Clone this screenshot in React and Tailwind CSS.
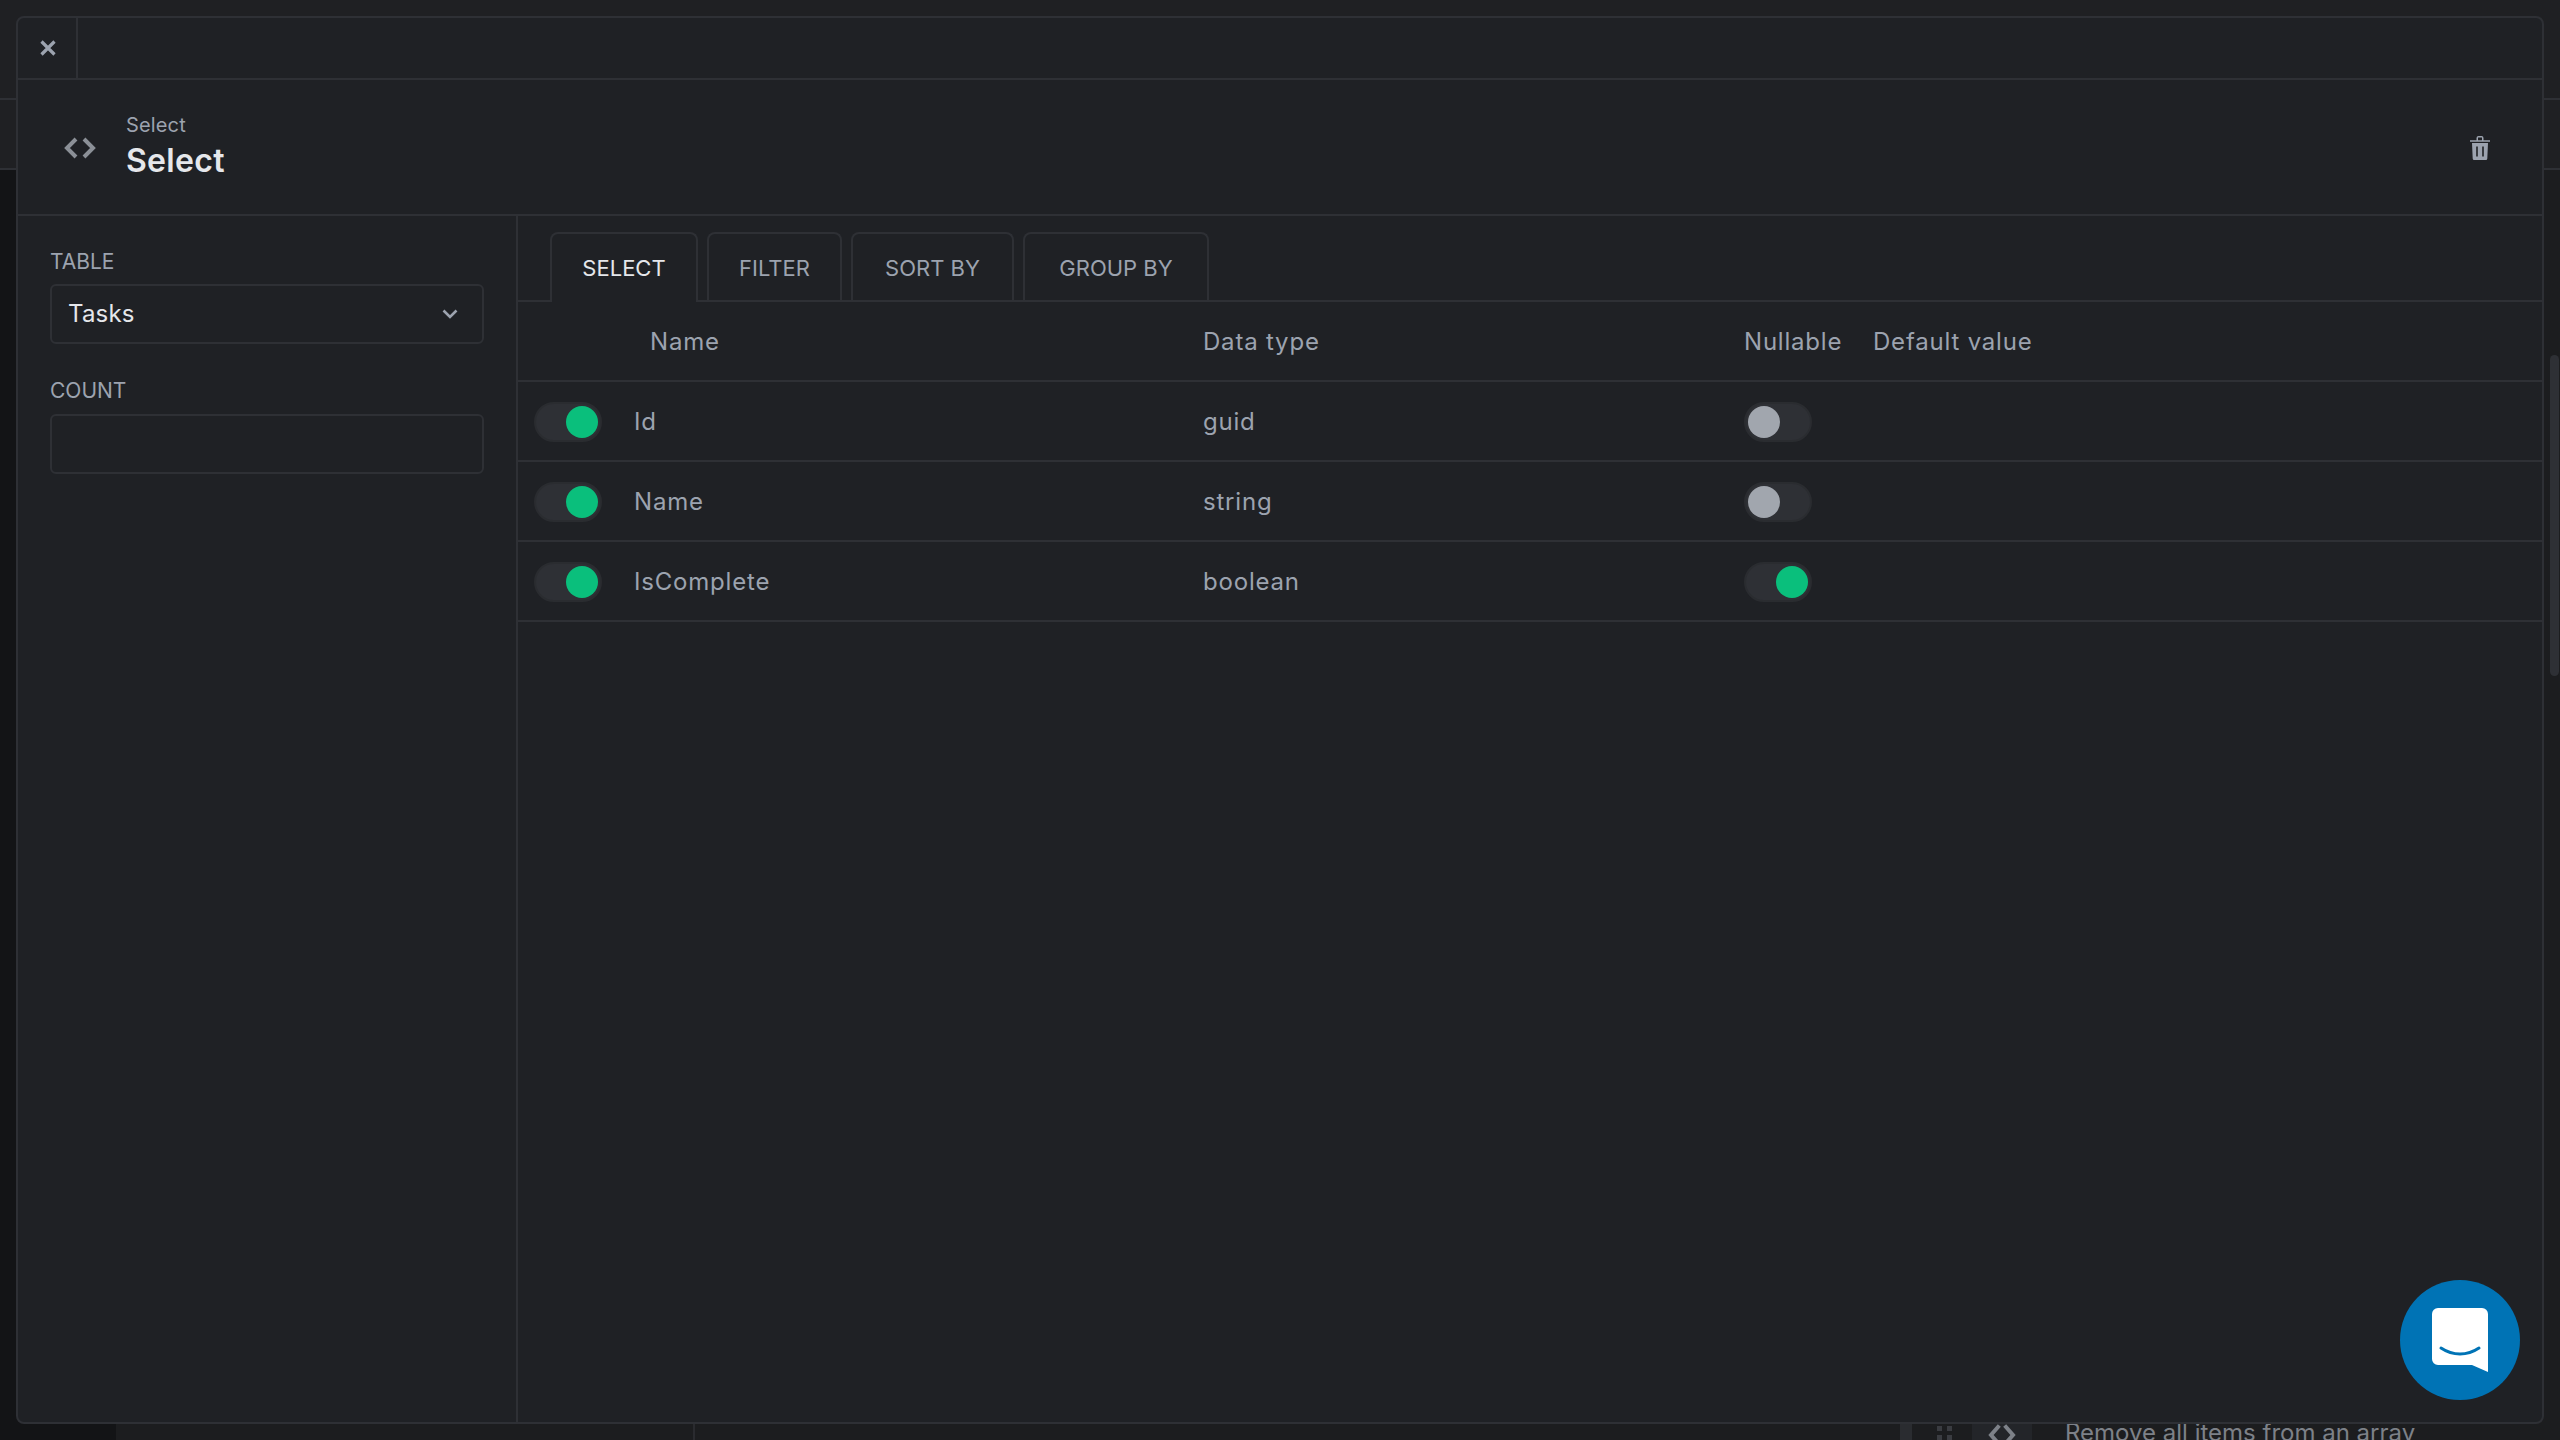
const Toggle = ({ on }) => (
  <div className={`flex h-[40px] w-[68px] items-center rounded-full border-2 border-[#2a2c30] bg-[#2e3035] px-[2px] ${on ? "justify-end" : "justify-start"}`}>
    <div className={`h-[32px] w-[32px] rounded-full ${on ? "bg-[#0abf7c]" : "bg-[#a1a6ae]"}`} />
  </div>
);

const rows = [
  { name: "Id", type: "guid", nullable: false },
  { name: "Name", type: "string", nullable: false },
  { name: "IsComplete", type: "boolean", nullable: true },
];

const tabs = [
  { label: "SELECT", w: "w-[148px]", active: true },
  { label: "FILTER", w: "w-[135px]" },
  { label: "SORT BY", w: "w-[163px]" },
  { label: "GROUP BY", w: "w-[186px]" },
];

const gridCols = "grid grid-cols-[100px_569px_541px_129px_1fr] items-center pl-4 pt-[2px]";

export default function App() {
  return (
    <div className="relative h-[1440px] w-[2560px] overflow-hidden bg-[#1f2023] font-['Inter',sans-serif]">
      {/* page behind the dialog */}
      <div className="flex h-full flex-col">
        <div className="h-[100px] shrink-0 border-b-2 border-[#2e3035]" />
        <div className="h-[70px] shrink-0 border-b-2 border-[#2e3035]" />
        <div className="flex min-h-0 flex-1">
          <div className="w-[116px] shrink-0 bg-[#131416]" />
          <div className="flex flex-1 bg-[#1c1d1f]">
            <div className="w-[579px] shrink-0 border-r-2 border-[#2a2b2f]" />
            <div className="flex flex-1 flex-col justify-end">
              <div className="flex h-[16px] items-start overflow-hidden pl-[1205px]">
                <div className="h-[16px] w-[12px] bg-[#2a2c30]" />
                <div className="ml-[25px] mt-[2px] grid h-[14px] w-[16px] grid-cols-2 gap-[4px]">
                  <span className="h-[5px] w-[5px] bg-[#3a3c41]" />
                  <span className="h-[5px] w-[5px] bg-[#3a3c41]" />
                  <span className="h-[5px] w-[5px] bg-[#3a3c41]" />
                  <span className="h-[5px] w-[5px] bg-[#3a3c41]" />
                </div>
                <div className="ml-[19px] flex h-[16px] w-[60px] justify-center bg-[#232529]">
                  <svg width="32" height="22" viewBox="0 0 32 22" fill="none" stroke="#7d8188" strokeWidth="4" strokeLinecap="square">
                    <path d="M12 3 5 11l7 8M20 3l7 8-7 8" />
                  </svg>
                </div>
                <span className="ml-[33px] -mt-[6px] whitespace-nowrap text-[24px] leading-[30px] text-[#7d8188]">Remove all items from an array</span>
              </div>
            </div>
          </div>
        </div>
      </div>
      <div className="absolute right-[1px] top-[355px] h-[321px] w-[9px] rounded-full bg-[#2e3035]" />

      {/* dialog */}
      <div className="absolute left-[16px] top-[16px] flex h-[1408px] w-[2528px] flex-col rounded-[8px] border-2 border-[#2e3035] bg-[#1f2125]">
        <div className="flex h-[62px] shrink-0 border-b-2 border-[#2e3035]">
          <div className="flex w-[60px] items-center justify-center border-r-2 border-[#2e3035] pl-[2px]">
            <svg width="16" height="16" viewBox="0 0 16 16" fill="none" stroke="#9ca3af" strokeWidth="3.2">
              <path d="M1.5 1.5l13 13M14.5 1.5l-13 13" />
            </svg>
          </div>
        </div>

        <div className="flex h-[136px] shrink-0 items-center border-b-2 border-[#2e3035] pl-[46px] pr-[52px] pt-[2px]">
          <svg width="32" height="22" viewBox="0 0 32 22" fill="none" stroke="#8b9097" strokeWidth="4">
            <path d="M12 2 3 11l9 9M20 2l9 9-9 9" />
          </svg>
          <div className="-mt-[4px] ml-[30px] flex flex-col">
            <span className="mb-[2px] text-[20px] leading-[28px] tracking-[0.15px] text-[#9ca3af]">Select</span>
            <span className="text-[32px] font-semibold leading-[40px] tracking-[0.3px] text-[#e5e7eb]">Select</span>
          </div>
          <svg className="ml-auto" width="20" height="24" viewBox="0 0 20 24">
            <path fill="#9ca3af" d="M2 7h16l-.7 15.5a1.5 1.5 0 0 1-1.5 1.5H4.2a1.5 1.5 0 0 1-1.5-1.5zM0 4.2h6.5V2a2 2 0 0 1 2-2h3a2 2 0 0 1 2 2v2.2H20v1.6H0zM8 4.2h4V1.5H8z" />
            <path fill="#1f2125" d="M6.2 10.5h1.6v10H6.2zM12.2 10.5h1.6v10h-1.6z" />
          </svg>
        </div>

        <div className="flex min-h-0 flex-1">
          <aside className="w-[500px] shrink-0 border-r-2 border-[#2e3035] px-[32px] pt-[31px]">
            <div className="mb-[7px] h-[30px] text-[21px] leading-[30px] text-[#9ca3af]">TABLE</div>
            <div className="flex h-[60px] items-center justify-between rounded-[6px] border-2 border-[#2e3035] pl-[16px] pr-[24px]">
              <span className="text-[24px] tracking-[0.2px] text-[#e5e7eb]">Tasks</span>
              <svg width="16" height="10" viewBox="0 0 16 10" fill="none" stroke="#9ca3af" strokeWidth="2.6">
                <path d="M1.5 1.5 8 8l6.5-6.5" />
              </svg>
            </div>
            <div className="mb-[8px] mt-[32px] h-[30px] text-[21px] leading-[30px] text-[#9ca3af]">COUNT</div>
            <div className="h-[60px] rounded-[6px] border-2 border-[#2e3035]" />
          </aside>

          <main className="min-w-0 flex-1">
            <div className="flex h-[86px] items-end gap-[9px] border-b-2 border-[#2e3035] pl-[32px]">
              {tabs.map((t) => (
                <div
                  key={t.label}
                  className={`flex items-center justify-center rounded-t-[8px] border-2 border-b-0 border-[#2e3035] text-[22px] ${t.w} ${
                    t.active ? "-mb-[2px] h-[70px] bg-[#1f2125] text-[#e5e7eb]" : "h-[68px] pt-[2px] text-[#9ca3af]"
                  }`}
                >
                  {t.label}
                </div>
              ))}
            </div>

            <div className={`${gridCols} h-[80px] border-b-2 border-[#2e3035] text-[24px] tracking-[0.8px] text-[#9ca3af]`}>
              <span />
              <span className="pl-4">Name</span>
              <span>Data type</span>
              <span>Nullable</span>
              <span>Default value</span>
            </div>

            {rows.map((r) => (
              <div key={r.name} className={`${gridCols} h-[80px] border-b-2 border-[#2e3035] text-[24px] tracking-[0.8px] text-[#9ca3af]`}>
                <Toggle on />
                <span>{r.name}</span>
                <span>{r.type}</span>
                <Toggle on={r.nullable} />
                <span />
              </div>
            ))}
          </main>
        </div>
      </div>

      {/* chat launcher */}
      <div className="absolute bottom-[40px] right-[40px] flex h-[120px] w-[120px] items-center justify-center rounded-full bg-[#0073b5]">
        <svg width="56" height="64" viewBox="0 0 56 64">
          <path fill="#ffffff" d="M6 0h44a6 6 0 0 1 6 6v58L40 57H6a6 6 0 0 1-6-6V6a6 6 0 0 1 6-6z" />
          <path fill="none" stroke="#0073b5" strokeWidth="3" strokeLinecap="round" d="M9 40c12 8 26 8 38 0" />
        </svg>
      </div>
    </div>
  );
}
